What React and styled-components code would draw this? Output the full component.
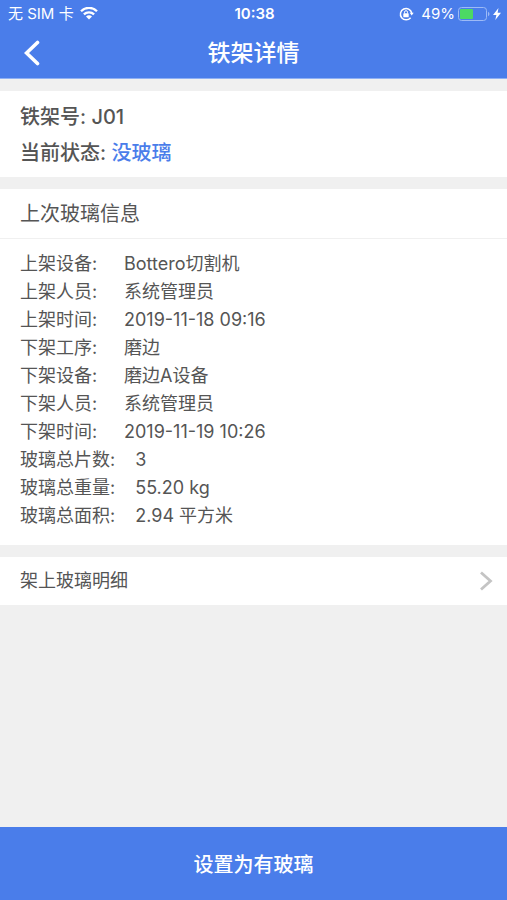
import React from "react";
import styled, { createGlobalStyle } from "styled-components";

const GlobalStyle = createGlobalStyle`
  * {
    box-sizing: border-box;
  }
  body {
    margin: 0;
    background: #f0f0f0;
    color: #555555;
    font-family: Inter, "Noto Sans CJK SC", sans-serif;
  }
  button {
    font-family: inherit;
  }
`;
const Page = styled.div`
  display: flex;
  flex-direction: column;
  min-height: 100vh;
`;
const StatusBar = styled.div`
  display: grid;
  grid-template-columns: 1fr auto 1fr;
  align-items: center;
  height: 28px;
  padding: 0 6px 0 8px;
  background: #4a7dea;
  color: #ffffff;
  font-size: 15px;
  line-height: 20px;
`;
const StatusGroup = styled.div`
  display: flex;
  align-items: center;
  justify-content: ${(props) => (props.$end ? "flex-end" : "flex-start")};
  gap: ${(props) => (props.$end ? "3px" : "6px")};
`;
const Clock = styled.time`
  font-weight: 600;
`;
const Lock = styled.svg`
  margin-right: 4px;
`;
const Header = styled.header`
  display: grid;
  grid-template-columns: 64px 1fr 64px;
  align-items: center;
  height: 51px;
  background: #4a7dea;
  border-bottom: 1px solid #8fb0f4;
`;
const BackButton = styled.button`
  display: flex;
  align-items: center;
  justify-content: center;
  height: 48px;
  padding: 0;
  border: 0;
  background: none;
  color: #ffffff;
`;
const Title = styled.h1`
  margin: 0;
  color: #ffffff;
  font-size: 23px;
  font-weight: 500;
  line-height: 48px;
  text-align: center;
`;
const Main = styled.main`
  display: flex;
  flex: 1;
  flex-direction: column;
  gap: 12px;
  padding: 12px 0;
`;
const Panel = styled.section`
  background: #ffffff;
`;
const Summary = styled(Panel)`
  padding: 8px 20px 6px;
  font-size: 20px;
  font-weight: 500;
  line-height: 36px;
`;
const SummaryLine = styled.div``;
const State = styled.span`
  color: #4a7dea;
`;
const PanelTitle = styled.h2`
  margin: 0;
  padding: 2px 20px 0;
  border-bottom: 1px solid #f0f0f0;
  font-size: 20px;
  font-weight: 400;
  line-height: 47px;
`;
const InfoList = styled.dl`
  margin: 0;
  padding: 11px 20px 15px;
  font-size: 18px;
  line-height: 28px;
`;
const InfoRow = styled.div`
  display: flex;
  gap: 20px;
`;
const InfoLabel = styled.dt`
  min-width: 84px;
`;
const InfoValue = styled.dd`
  margin: 0;
`;
const DetailLink = styled.a`
  display: flex;
  align-items: center;
  justify-content: space-between;
  padding: 0 14px 0 20px;
  background: #ffffff;
  color: inherit;
  font-size: 18px;
  line-height: 48px;
  text-decoration: none;
`;
const SubmitButton = styled.button`
  height: 73px;
  padding: 0;
  border: 0;
  background: #4a7dea;
  color: #ffffff;
  font-size: 20px;
  font-weight: 500;
`;

const info = [
  ["上架设备", "Bottero切割机"],
  ["上架人员", "系统管理员"],
  ["上架时间", "2019-11-18 09:16"],
  ["下架工序", "磨边"],
  ["下架设备", "磨边A设备"],
  ["下架人员", "系统管理员"],
  ["下架时间", "2019-11-19 10:26"],
  ["玻璃总片数", "3"],
  ["玻璃总重量", "55.20 kg"],
  ["玻璃总面积", "2.94 平方米"],
];

const WifiIcon = () => (
  <svg width="18" height="14" viewBox="0 0 18 14" fill="none" stroke="#fff" strokeWidth="2.3">
    <path d="M1 4.2a11.3 11.3 0 0 1 16 0" />
    <path d="M3.9 7.4a7.2 7.2 0 0 1 10.2 0" />
    <path d="M9 12.6 6 9.6a4.2 4.2 0 0 1 6 0Z" fill="#fff" stroke="none" />
  </svg>
);

const RotationLockIcon = () => (
  <Lock width="15" height="14" viewBox="0 0 15 14" fill="none" stroke="#fff">
    <path d="M11.6 10.7A5.7 5.7 0 1 1 12.7 6" strokeWidth="1.5" />
    <path d="M10.7 5.8h4l-2 2.8Z" fill="#fff" stroke="none" />
    <rect x="4.3" y="6.3" width="5.4" height="4" rx="0.6" fill="#fff" stroke="none" />
    <path d="M5.5 6.5V5.2a1.5 1.5 0 0 1 3 0v1.3" strokeWidth="1" />
  </Lock>
);

const BatteryIcon = () => (
  <svg width="32" height="14" viewBox="0 0 32 14">
    <rect x="0.5" y="0.5" width="28" height="13" rx="3" fill="none" stroke="#9dbaf6" />
    <rect x="2" y="2" width="13" height="10" rx="1" fill="#4cd964" />
    <path d="M30 4.8c2 .8 2 3.6 0 4.4Z" fill="#9dbaf6" />
  </svg>
);

const BoltIcon = () => (
  <svg width="8" height="12" viewBox="0 0 8 12">
    <path d="M5.5 0 0 7h3.4L2.3 12 8 4.8H4.6Z" fill="#fff" />
  </svg>
);

const App = () => {
  return (
    <>
      <GlobalStyle />
      <Page>
        <StatusBar>
          <StatusGroup>
            <span>无 SIM 卡</span>
            <WifiIcon />
          </StatusGroup>
          <Clock>10:38</Clock>
          <StatusGroup $end>
            <RotationLockIcon />
            <span>49%</span>
            <BatteryIcon />
            <BoltIcon />
          </StatusGroup>
        </StatusBar>
        <Header>
          <BackButton type="button" aria-label="返回">
            <svg width="16" height="26" viewBox="0 0 16 26" fill="none" stroke="currentColor">
              <path d="M13.5 2.5 2.5 13l11 10.5" strokeWidth="3.6" strokeLinecap="round" />
            </svg>
          </BackButton>
          <Title>铁架详情</Title>
        </Header>
        <Main>
          <Summary>
            <SummaryLine>铁架号: J01</SummaryLine>
            <SummaryLine>
              当前状态: <State>没玻璃</State>
            </SummaryLine>
          </Summary>
          <Panel>
            <PanelTitle>上次玻璃信息</PanelTitle>
            <InfoList>
              {info.map(([label, value]) => (
                <InfoRow key={label}>
                  <InfoLabel>{label}:</InfoLabel>
                  <InfoValue>{value}</InfoValue>
                </InfoRow>
              ))}
            </InfoList>
          </Panel>
          <DetailLink href="#detail">
            架上玻璃明细
            <svg width="14" height="20" viewBox="0 0 14 20" fill="none" stroke="#c4c4c4">
              <path d="M2 1.5 11.5 10 2 18.5" strokeWidth="2.8" />
            </svg>
          </DetailLink>
        </Main>
        <SubmitButton type="button">设置为有玻璃</SubmitButton>
      </Page>
    </>
  );
};

export default App;
